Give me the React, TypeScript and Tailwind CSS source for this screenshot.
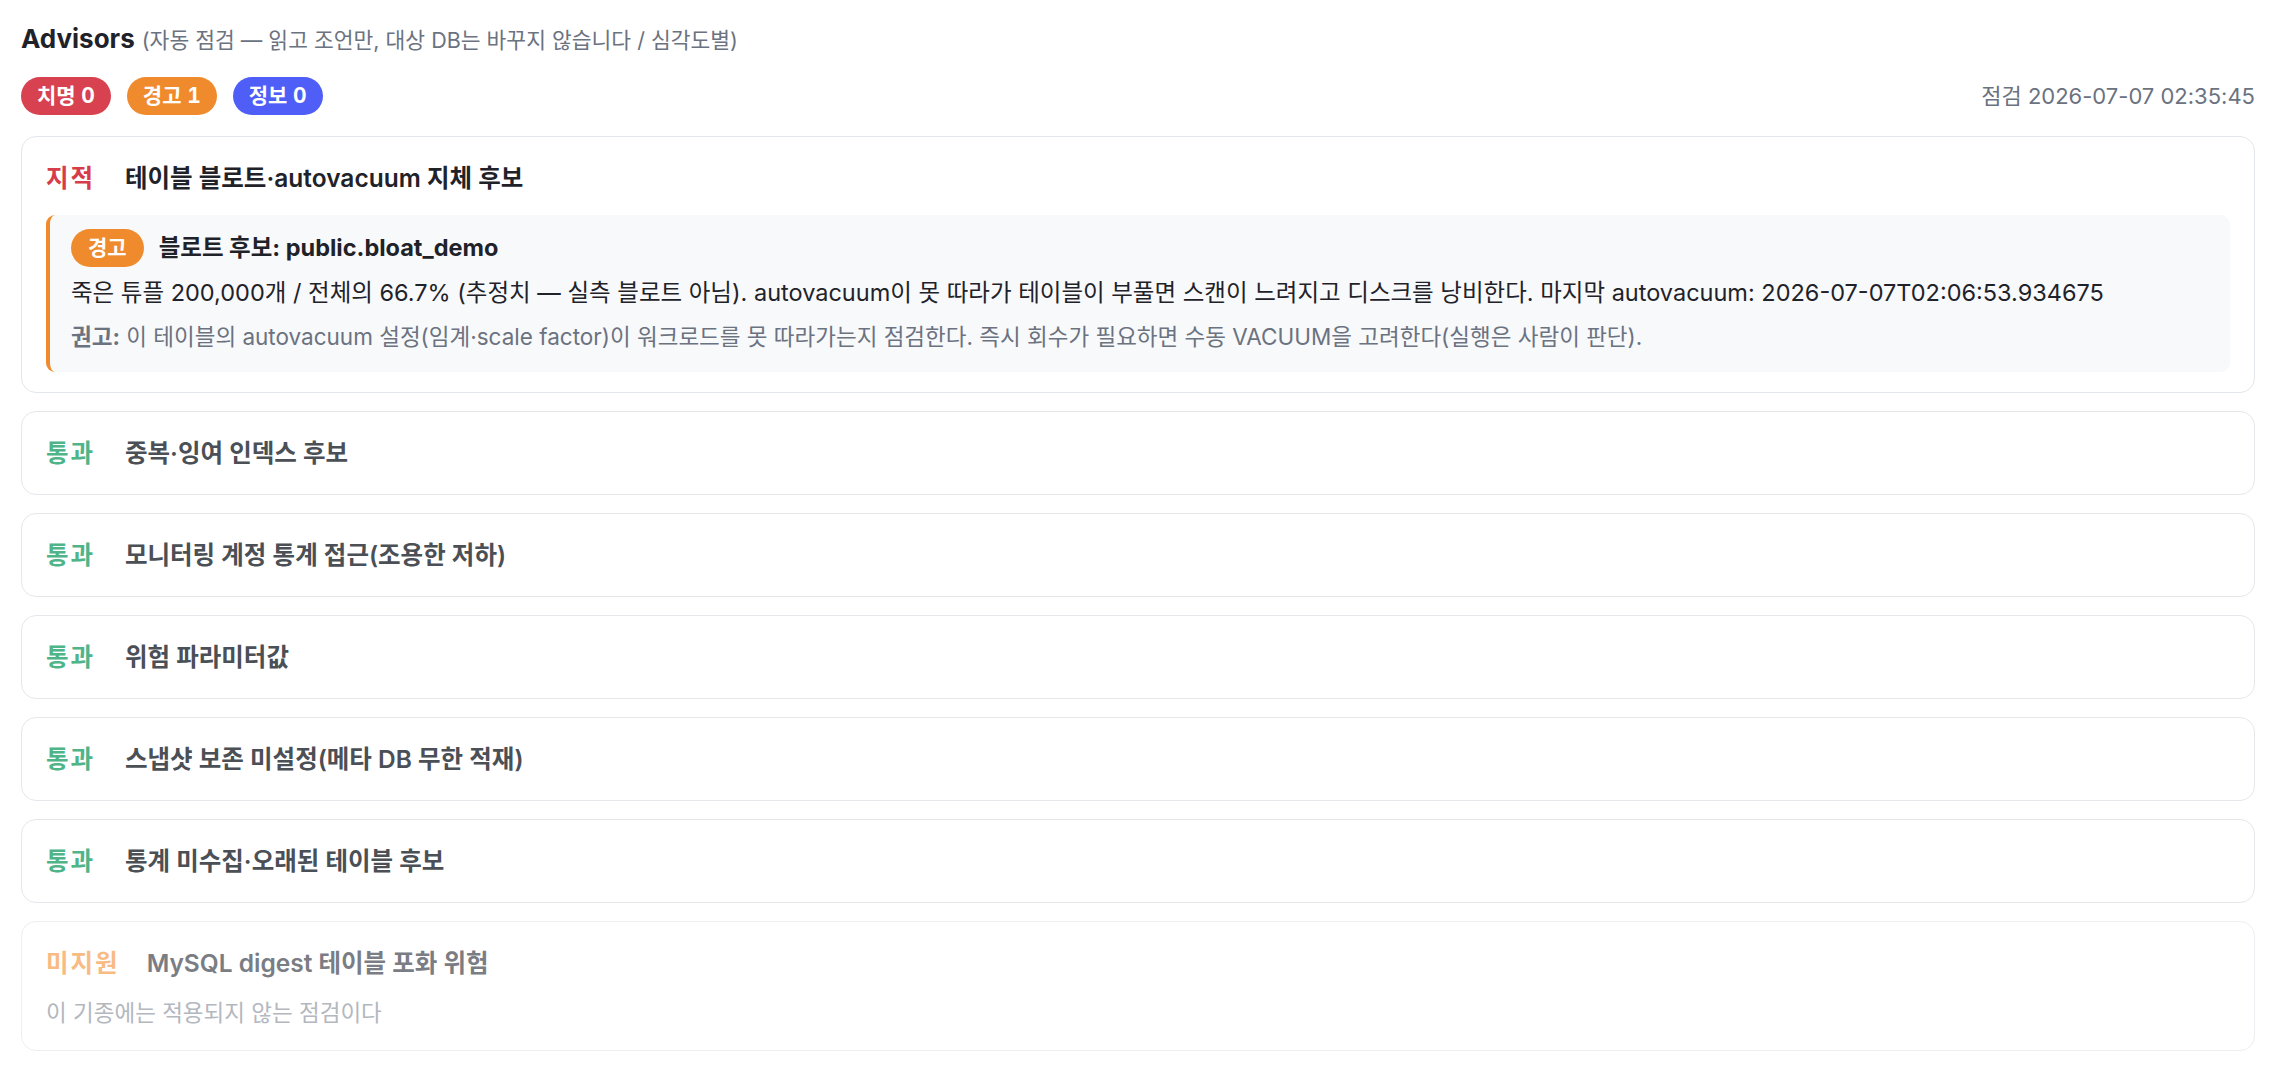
type Tone = "pass" | "na";

type Check = {
  title: string;
  tone: Tone;
  note?: string;
};

const checks: Check[] = [
  { title: "중복·잉여 인덱스 후보", tone: "pass" },
  { title: "모니터링 계정 통계 접근(조용한 저하)", tone: "pass" },
  { title: "위험 파라미터값", tone: "pass" },
  { title: "스냅샷 보존 미설정(메타 DB 무한 적재)", tone: "pass" },
  { title: "통계 미수집·오래된 테이블 후보", tone: "pass" },
  {
    title: "MySQL digest 테이블 포화 위험",
    tone: "na",
    note: "이 기종에는 적용되지 않는 점검이다",
  },
];

function CountBadge({ label, count, color }: { label: string; count: number; color: string }) {
  return (
    <span
      className={`flex h-[38px] items-center rounded-full px-[16px] text-[21px] font-bold tabular-nums text-white ${color}`}
    >
      {label} {count}
    </span>
  );
}

function CheckCard({ check }: { check: Check }) {
  const na = check.tone === "na";
  return (
    <div
      className={`rounded-[15px] border bg-white px-[24px] py-[24px] ${
        na ? "border-[#eceef1]" : "border-[#e5e7eb]"
      }`}
    >
      <div className="flex h-[34px] items-center gap-[27px] text-[24.5px] leading-[34px]">
        <span
          className={`min-w-[52px] font-bold tracking-[2px] ${na ? "text-[#f8bb83]" : "text-[#4fb488]"}`}
        >
          {na ? "미지원" : "통과"}
        </span>
        <span className={`font-semibold ${na ? "text-[#7a7d83]" : "text-[#4b4f56]"}`}>{check.title}</span>
      </div>
      {check.note && (
        <p className="mt-[19px] text-[22.5px] leading-[27px] text-[#b3b7be]">{check.note}</p>
      )}
    </div>
  );
}

export default function App() {
  return (
    <div className="min-h-screen bg-white px-[21px] pt-[19px] pb-[21px] font-['Inter','Noto_Sans_CJK_KR',sans-serif] text-[#1f2329]">
      <div className="flex h-[40px] items-baseline gap-[7px] leading-[40px]">
        <h1 className="text-[26px] font-bold">Advisors</h1>
        <span className="text-[21.5px] text-[#6b7280]">
          (자동 점검 — 읽고 조언만, 대상 DB는 바꾸지 않습니다 / 심각도별)
        </span>
      </div>

      <div className="mt-[18px] flex h-[38px] items-center justify-between">
        <div className="flex items-center gap-[16px]">
          <CountBadge label="치명" count={0} color="bg-[#d8414f]" />
          <CountBadge label="경고" count={1} color="bg-[#f08b2d]" />
          <CountBadge label="정보" count={0} color="bg-[#4f5ef6]" />
        </div>
        <span className="text-[22px] text-[#6b7280]">점검 2026-07-07 02:35:45</span>
      </div>

      <div className="mt-[21px] flex flex-col gap-[18px]">
        <div className="rounded-[15px] border border-[#e3e6ea] bg-white px-[24px] pt-[24px] pb-[20px]">
          <div className="flex h-[34px] items-center gap-[27px] text-[24.5px] leading-[34px]">
            <span className="min-w-[52px] font-bold tracking-[2px] text-[#d63c49]">지적</span>
            <span className="font-semibold text-[#1f2329]">테이블 블로트·autovacuum 지체 후보</span>
          </div>

          <div className="mt-[20px] rounded-[9px] border-l-[4.5px] border-[#f08b2d] bg-[#f8f9fb] px-[21px] pt-[14px] pb-[22px]">
            <div className="flex h-[38px] items-center gap-[15px]">
              <span className="flex h-[38px] items-center rounded-full bg-[#f08b2d] px-[17px] text-[21px] font-bold text-white">
                경고
              </span>
              <span className="text-[23.5px] font-bold text-[#1f2329]">블로트 후보: public.bloat_demo</span>
            </div>
            <p className="mt-[10px] text-[23.5px] leading-[31.5px] text-[#1f2329]">
              죽은 튜플 200,000개 / 전체의 66.7% (추정치 — 실측 블로트 아님). autovacuum이 못 따라가 테이블이
              부풀면 스캔이 느려지고 디스크를 낭비한다. 마지막 autovacuum: 2026-07-07T02:06:53.934675
            </p>
            <p className="mt-[15px] text-[22.5px] leading-[26px] text-[#6b7280]">
              <span className="font-bold">권고:</span> 이 테이블의 autovacuum 설정(임계·scale factor)이
              워크로드를 못 따라가는지 점검한다. 즉시 회수가 필요하면 수동 VACUUM을 고려한다(실행은 사람이 판단).
            </p>
          </div>
        </div>

        {checks.map((c) => (
          <CheckCard key={c.title} check={c} />
        ))}
      </div>
    </div>
  );
}
